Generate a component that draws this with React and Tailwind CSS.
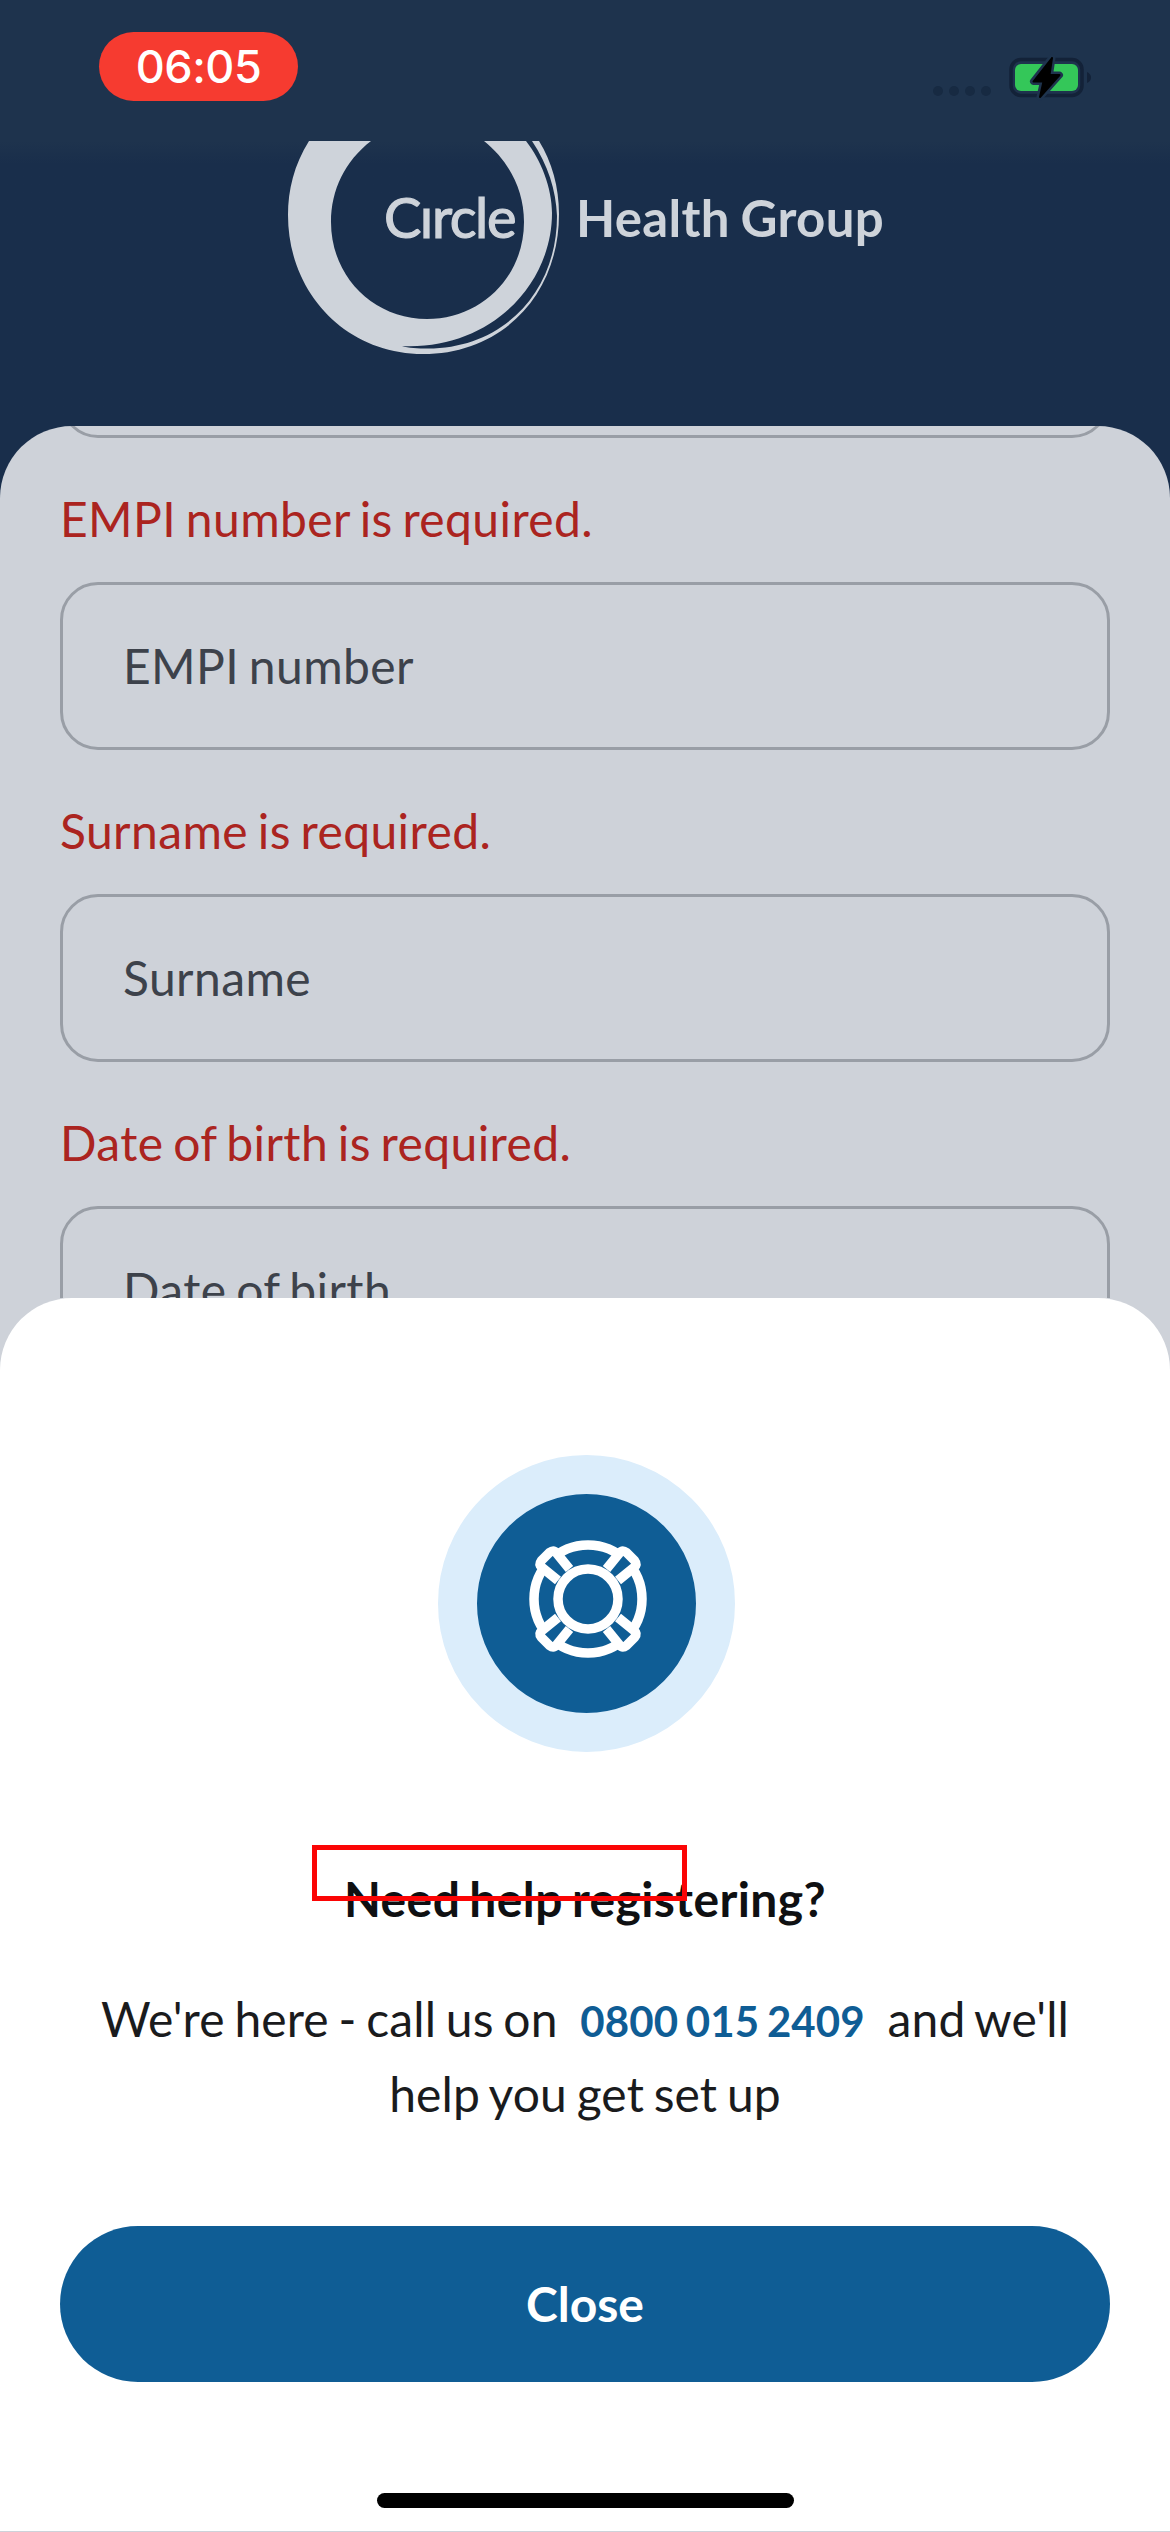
function Field({ label, error }) {
  return (
    <div className="flex flex-col h-[312px] shrink-0 tracking-[0.4px] [word-spacing:-3px]">
      <div className="h-[144px] pt-[51px] text-[48px] leading-[60px] text-[#ab2420] whitespace-nowrap">{error}</div>
      <div className="h-[168px] rounded-[38px] border-[3px] border-[#999ea6] px-[60px] flex items-center text-[48px] text-[#3d424b]">
        {label}
      </div>
    </div>
  );
}

function Logo() {
  return (
    <svg className="w-[290px] h-[225px] shrink-0" viewBox="280 141 290 225" fill="#ced3da">
      <path
        fillRule="evenodd"
        d="M309 141 C294 165 288 190 288 215 C288 293 346 354 423 354 C501 354 559 296 559 214 C559 187 552 162 539 141 L532 141 C548 165 556 190 557 216 C557 293 502 348.500 428 348.500 C418 348.500 408 348 402 346 C490 350 552 285 552 213 C552 188 541 160 526 141 L484 141 C509 161 524 190 524 222 C524 277 481 319 427 319 C374 319 331 277 331 222 C331 190 345 161 371 141 Z"
      />
    </svg>
  );
}

function LifeRing() {
  return (
    <svg className="w-[136px] h-[136px]" viewBox="-68 -68 136 136" fill="none" stroke="#fff" strokeWidth="9.5" strokeLinejoin="round">
      <circle r="54" />
      {[0, 90, 180, 270].map((a) => (
        <g key={a} transform={`rotate(${a})`}>
          <path fill="#0f5d95" d="M18.500 -30 L31.500 -46 Q34.500 -49.500 38.500 -46.500 L46.500 -38.500 Q49.500 -34.500 46 -31.500 L30 -18.500" />
        </g>
      ))}
      <circle r="30" fill="#0f5d95" />
    </svg>
  );
}

export default function App() {
  return (
    <div className="relative w-[1170px] h-[2532px] overflow-hidden bg-[#192e4b] font-['Lato',sans-serif] flex flex-col">
      <div className="h-[141px] shrink-0 bg-[#1e334d] flex justify-between">
        <div className="ml-[99px] mt-[32px] w-[199px] h-[69px] rounded-[35px] bg-[#f63b30] text-white text-[45px] tracking-[-0.5px] font-medium font-['Inter',sans-serif] flex items-center justify-center">
          06:05
        </div>
        <svg className="w-[180px] h-[70px] mt-[50px] mr-[70px]" viewBox="920 50 180 70">
          {[938, 954, 970, 986].map((x) => (
            <circle key={x} cx={x} cy="91" r="5" fill="#172a42" />
          ))}
          <rect x="1011" y="59.500" width="71" height="36" rx="10" fill="none" stroke="#132238" strokeWidth="3.500" />
          <rect x="1015" y="64" width="63" height="27" rx="6" fill="#34c759" />
          <path d="M1087 72 Q1091 74 1091 77.500 Q1091 81 1087 83Z" fill="#132238" />
          <path d="M1052 58 L1033.500 81.500 H1043.500 L1040 97 L1059.500 75 H1049.500Z" fill="#1e334d" stroke="#1e334d" strokeWidth="7" strokeLinejoin="round" />
          <path d="M1052 58 L1033.500 81.500 H1043.500 L1040 97 L1059.500 75 H1049.500Z" fill="#000" stroke="#000" strokeWidth="2" strokeLinejoin="round" />
        </svg>
      </div>
      <div className="h-[285px] shrink-0 flex pl-[280px] bg-linear-to-b from-[#1e334d] via-[#192e4b] via-8% to-[#192e4b]">
        <Logo />
        <div className="text-[#ced3da] text-[51px] font-bold whitespace-nowrap mt-[44px] leading-[66px] ml-[6px] tracking-[0.3px] [word-spacing:-2px]">Health Group</div>
        <div className="absolute left-[384px] top-[184px] text-[#ced3da] text-[56px] leading-[66px] tracking-[-1.4px] [-webkit-text-stroke:1.2px_#ced3da]">Cırcle</div>
      </div>
      <div className="h-[900px] shrink-0 rounded-t-[72px] bg-[#ced2d9] px-[60px] overflow-hidden flex flex-col">
        <div className="h-[168px] -mt-[156px] shrink-0 rounded-[38px] border-[3px] border-[#999ea6]" />
        <Field label="EMPI number" error="EMPI number is required." />
        <Field label="Surname" error="Surname is required." />
        <Field label="Date of birth" error="Date of birth is required." />
      </div>
      <div className="absolute inset-x-0 top-[1298px] bottom-0 bg-[#ced2d9] flex flex-col">
        <div className="h-[1233px] bg-white rounded-t-[72px] flex flex-col items-center px-[60px]">
          <div className="mt-[157px] ml-[3px] w-[297px] h-[297px] shrink-0 rounded-full border-[39px] border-[#dbedfb] bg-[#0f5d95]">
            <div className="mt-[37px] ml-[43px]">
              <LifeRing />
            </div>
          </div>
          <h1 className="mt-[117px] h-[60px] leading-[60px] text-[48px] font-bold text-[#0f1012] whitespace-nowrap tracking-[0.4px] [word-spacing:-3px]">Need help registering?</h1>
          <p className="mt-[52px] text-[48px] leading-[75px] text-[#1a1b1d] text-center whitespace-nowrap tracking-[0.12px] [word-spacing:-2.700px]">
            We're here - call us on <a className="mx-[13px] text-[42px] leading-none font-bold text-[#0f5d95]">0800 015 2409</a> and we'll
            <br />
            help you get set up
          </p>
          <button className="mt-[95px] w-full h-[156px] shrink-0 rounded-full bg-[#0f5d95] text-white text-[48px] font-bold">Close</button>
          <div className="mt-[111px] w-[417px] h-[15px] shrink-0 rounded-full bg-black" />
        </div>
      </div>
      <div className="absolute left-[312px] top-[1845px] w-[375px] h-[56px] border-[5px] border-[#fb0505]" />
    </div>
  );
}
